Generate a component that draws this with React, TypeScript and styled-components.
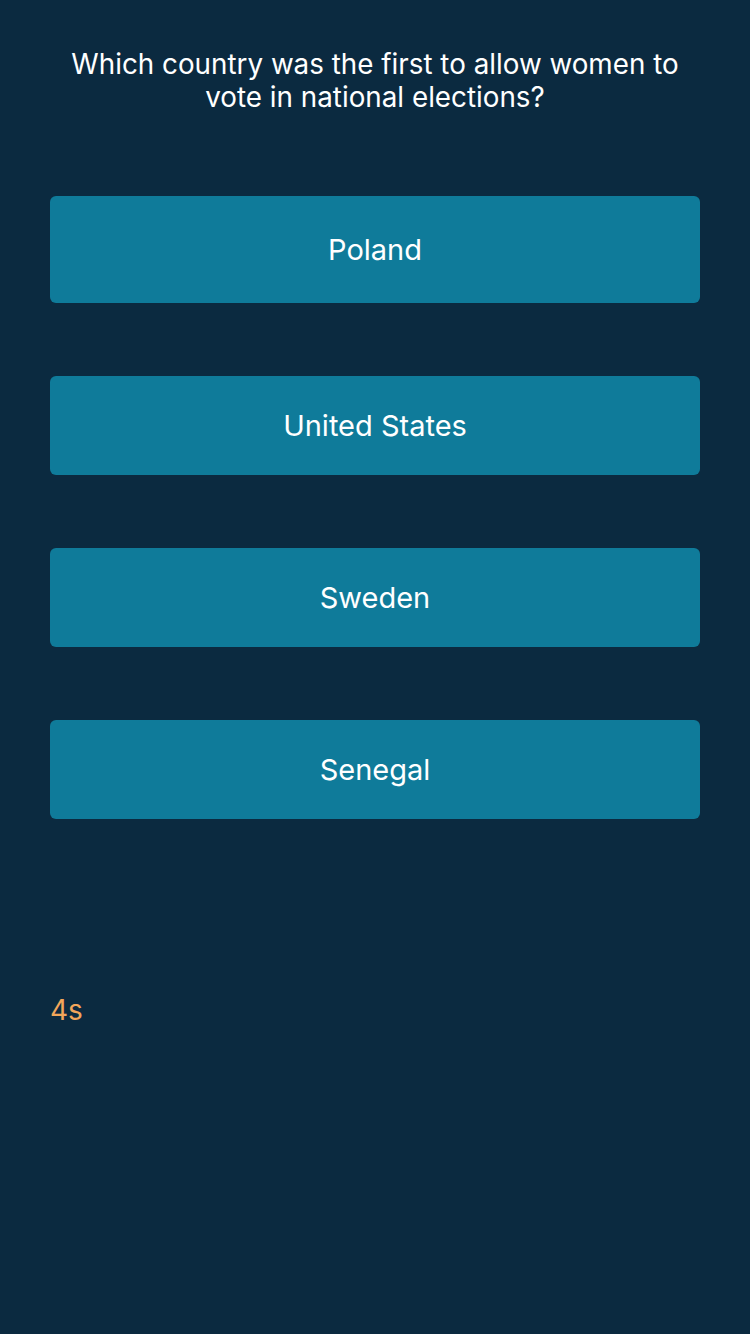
import React from "react";
import styled, { createGlobalStyle } from "styled-components";

const Global = createGlobalStyle`
  html, body { margin: 0; padding: 0; background: #0b2a40; }
  body { font-family: Inter, Roboto, "Noto Sans", sans-serif; }
`;

const Screen = styled.div`
  width: 750px;
  min-height: 1334px;
  background: #0b2a40;
  display: flex;
  flex-direction: column;
  box-sizing: border-box;
  padding: 48px 50px 0;
`;

const Question = styled.h1`
  margin: 0;
  color: #ffffff;
  font-family: Inter, Roboto, sans-serif;
  font-size: 27.8px;
  font-weight: 400;
  line-height: 33px;
  text-align: center;
  padding: 0 10px;
`;

const Answers = styled.div`
  display: flex;
  flex-direction: column;
  gap: 73px;
  margin-top: 82px;
`;

const Answer = styled.button<{ $tall?: boolean }>`
  height: ${(p) => (p.$tall ? 107 : 99)}px;
  border: none;
  border-radius: 6px;
  background: #0f7b9a;
  color: #ffffff;
  font-family: Inter, Roboto, sans-serif;
  font-size: 29px;
  font-weight: 400;
  display: flex;
  align-items: center;
  justify-content: center;
  padding: 0;
  cursor: pointer;
`;

const Timer = styled.div`
  margin-top: 174px;
  color: #f2a65a;
  font-family: Inter, Roboto, sans-serif;
  font-size: 28px;
  line-height: 34px;
`;

const answers = ["Poland", "United States", "Sweden", "Senegal"];

export default function App() {
  return (
    <>
      <Global />
      <Screen>
        <Question>
          Which country was the first to allow women to vote in national elections?
        </Question>
        <Answers>
          {answers.map((a, i) => (
            <Answer key={a} $tall={i === 0}>
              {a}
            </Answer>
          ))}
        </Answers>
        <Timer>4s</Timer>
      </Screen>
    </>
  );
}
